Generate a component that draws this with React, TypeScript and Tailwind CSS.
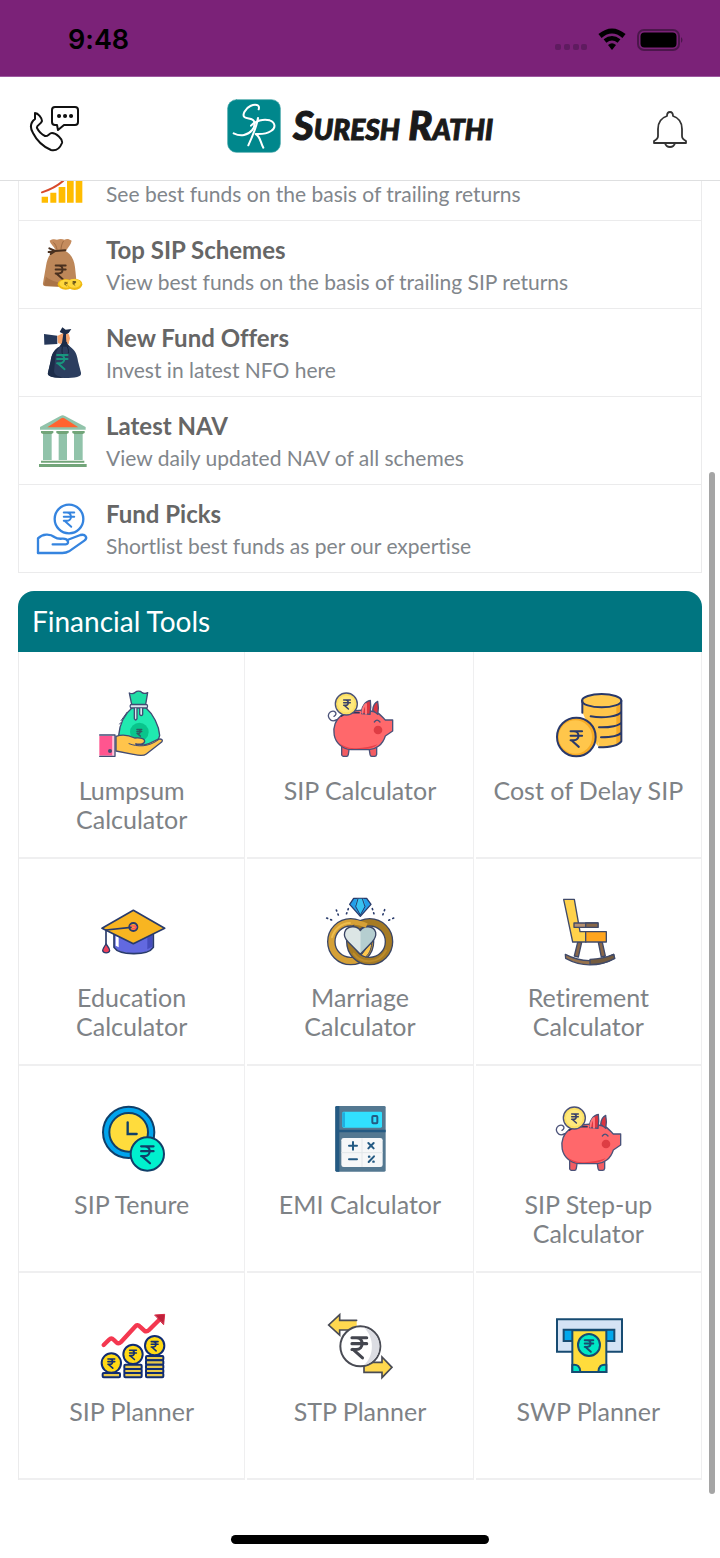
import type { ReactNode } from "react";

type IconProps = { box: string; children: ReactNode; className?: string };

function Icon({ box, children, className = "size-18" }: IconProps) {
  return (
    <svg
      viewBox={box}
      className={`${className} shrink-0`}
      fill="none"
      strokeLinecap="round"
      strokeLinejoin="round"
      aria-hidden="true"
    >
      {children}
    </svg>
  );
}

/* Rupee sign centred on (x, y), drawn on a 24 unit square. */
function Rupee({ x, y, s, color, w = 3 }: { x: number; y: number; s: number; color: string; w?: number }) {
  return (
    <g transform={`translate(${x} ${y}) scale(${s / 24}) translate(-12 -12)`} stroke={color} strokeWidth={w} fill="none">
      <path d="M5 3h14M5 8.5h14M5 14h4c7.5 0 7.5-11 0-11M6 14l9 8" />
    </g>
  );
}

function ReturnsIcon() {
  return (
    <Icon box="42 -63 168 168" className="size-14">
      <g fill="#ffbc00">
        <path d="M65 80h19v18H65zM91 68h18v30H91zM116 51h20v47h-20zM141 32h20v66h-20zM167 10h20v88h-20z" />
      </g>
      <path d="M66 67c30-10 45-18 64-35l30-30" stroke="#d84a2b" strokeWidth="6" />
    </Icon>
  );
}

function SackIcon() {
  return (
    <Icon box="42 201 168 168" className="size-14">
      <path d="M89 212c8-6 16-5 22-3 10-4 17-2 22 0 8-3 14-2 22 3-2 12-10 18-16 29h-32c-4-12-16-18-18-29z" fill="#c58c5e" />
      <path d="M104 243h32c18 9 27 27 29 49l5 48c-5 8-12 10-23 9H78c-8-1-10-5-9-10l9-51c3-22 11-38 26-45z" fill="#bd8759" />
      <path d="M78 320c-2 12-6 20-6 26 20 6 58 4 90 2l6-10c-30 4-66 2-90-18z" fill="#a97347" />
      <path d="M101 218c6 5 8 12 10 20M130 214c-5 8-6 14-7 23" stroke="#9f6b42" strokeWidth="3" />
      <path d="M88 235l18 8 30-2M106 243l-20 3M106 243l-14 9" stroke="#49301f" strokeWidth="6" />
      <Rupee x={122} y={306} s={52} color="#49301f" w={2.6} />
      <ellipse cx="137" cy="343" rx="24" ry="16" fill="#eeb912" />
      <ellipse cx="138" cy="341" rx="20" ry="12" fill="#ffd83d" />
      <ellipse cx="164" cy="343" rx="23" ry="17" fill="#eeb912" />
      <ellipse cx="162" cy="340" rx="20" ry="13" fill="#ffd83d" />
      <Rupee x={138} y={342} s={13} color="#6c5312" w={4} />
      <Rupee x={163} y={340} s={14} color="#493b14" w={4} />
    </Icon>
  );
}

function OfferIcon() {
  return (
    <Icon box="42 465 168 168" className="size-14">
      <path d="M72 492l40 5v25l-39 2z" fill="#263859" />
      <path d="M112 498l18-9 14 1 5 14-3 18-18 2-14-5z" fill="#f4a36d" />
      <path d="M119 486l8-14 10 7 17-2-8 12-8 4 4 28 11 12h-37l10-15 4-27z" fill="#1b2b48" />
      <path d="M138 496l9-3 2 12-3 15-7-5z" fill="#f4a36d" />
      <path d="M118 530h32c15 9 22 25 24 44l9 34c3 13-18 16-49 16s-56-3-50-17l8-34c2-20 11-35 26-43z" fill="#2c3e5f" />
      <path d="M118 530c-18 10-24 26-26 44l-8 34c-4 12 20 16 50 16-26-6-35-12-31-28 3-27 1-47 15-66z" fill="#1d2d4a" />
      <path d="M127 531c-2 13-1 20 2 27M142 531c4 7 4 12 3 18" stroke="#16243c" strokeWidth="3" />
      <Rupee x={127} y={575} s={54} color="#18967e" w={2.6} />
    </Icon>
  );
}

function BankIcon() {
  return (
    <Icon box="42 69 168 168" className="size-14">
      <path d="M60 111l61-33q7-4 14 0l62 33v8H60z" fill="#91c3aa" />
      <path d="M82 112l42-27q4-3 9 0l42 27z" fill="#ff632f" />
      <path d="M69 129h26v81H69zM116 129h25v81h-25zM162 129h26v81h-26z" fill="#91c3aa" />
      <path d="M63 123h37v6l-6 3H69l-6-3zM109 123h37v6l-6 3h-25l-6-3zM157 123h37v6l-6 3h-25l-6-3z" fill="#72a579" />
      <path d="M63 212h130v6H63zM57 222h143v9H57z" fill="#72a579" />
    </Icon>
  );
}

function PicksIcon() {
  return (
    <Icon box="42 333 168 168" className="size-14">
      <g stroke="#3584df" strokeWidth="7">
        <circle cx="147" cy="387" r="43" />
        <path d="M54 489v-44c13-14 37-14 49-4 7 5 13 6 24 5 19-1 22 16 10 17H98" />
        <path d="M142 450l39-15c16-4 23 9 12 17l-46 32q-8 5-20 5H54" />
      </g>
      <Rupee x={147} y={388} s={54} color="#3584df" w={2.6} />
    </Icon>
  );
}

function LumpsumIcon() {
  return (
    <Icon box="45 27 216 216">
      <g stroke="#414b73" strokeWidth="4">
        <path d="M155 82h38c24 21 41 54 43 84-4 20-23 34-52 34-40 0-71-8-71-34 3-31 18-64 42-84z" fill="#20e9b0" />
        <path d="M152 73l-7-34c9 4 14 2 18-2 5-5 15-4 19 0 6 4 11 5 18 1l-6 35z" fill="#20dda6" />
        <path d="M149 74h49q4 5 0 10h-49q-4-5 0-10z" fill="#dce6ee" />
        <path d="M160 85v31q4 8 8 0V85M176 85v18q5 8 9 0V85" fill="#dce6ee" />
      </g>
      <circle cx="175" cy="156" r="28" fill="#09c58c" />
      <Rupee x={175} y={158} s={25} color="#315b65" w={4} />
      <path d="M120 122l18-25M116 132l3-4" stroke="#414b73" strokeWidth="3" />
      <path d="M105 169c22-8 42-2 56 5 14-1 29 0 30 9 0 9-12 11-27 9 30 9 48-6 66-14 12-3 17 2 12 8l-46 36c-10 8-26 4-39 1l-52-10z" fill="#ffc44b" stroke="#414b73" strokeWidth="4" />
      <path d="M144 191c26 10 58 11 89-12" stroke="#414b73" strokeWidth="3" />
      <path d="M55 168h40v59H55z" fill="#ff558f" />
      <path d="M94 168h7v59h-7z" fill="#ffc2d8" />
      <path d="M56 165h46v64H56" stroke="#414b73" strokeWidth="4" />
      <circle cx="87" cy="213" r="6" fill="#414b73" />
    </Icon>
  );
}

function PiggyIcon() {
  return (
    <Icon box="42 27 216 216">
      <g stroke="#4b5279" strokeWidth="4">
        <path d="M80 119c-18 12-34-12-19-23 13-8 24 6 11 13" />
        <path d="M95 201v24q2 4 5 4h10q4 0 5-6l3-20M177 203l3 20q1 6 5 6h9q5 0 6-6v-24" fill="#f35c62" />
        <path d="M98 104c20-17 73-15 99-8 12 4 20 15 29 24h22v33l-22 15c-8 27-29 40-48 41h-55c-57-5-69-77-25-105z" fill="#ff686b" />
        <path d="M188 91c1-12 6-23 15-27 3 14 3 25 0 39zM155 101c-2-20 11-38 26-40 2 13 1 31-1 42z" fill="#dd3540" />
      </g>
      <path d="M87 188c27 25 81 18 116 5-10 10-24 14-37 14h-42c-18-1-30-9-37-19z" fill="#e9414a" />
      <path d="M157 98q2-19 11-26v29" stroke="#ff777a" strokeWidth="6" />
      <path d="M94 108l10-6M131 98h16" stroke="#2e355d" strokeWidth="5" />
      <circle cx="109" cy="72" r="33" fill="#fce064" stroke="#4b5279" strokeWidth="4" />
      <circle cx="109" cy="72" r="25" fill="#ffe97c" />
      <Rupee x={111} y={73} s={34} color="#394069" w={3.2} />
      <circle cx="204" cy="150" r="13" fill="#de3d44" />
      <path d="M193 126q8-11 17 0" stroke="#4b5279" strokeWidth="4" />
    </Icon>
  );
}

function CoinsIcon() {
  return (
    <Icon box="726 27 216 216">
      <path d="M817 62v36l30 25 22 80c35 0 65-6 65-20V62z" fill="#ffc64b" />
      <path d="M817 96l38 20 12 86-8-10z" fill="#ffc64b" />
      <path d="M919 80v113q14-4 15-10V68z" fill="#f6aa25" />
      <ellipse cx="875" cy="62" rx="59" ry="20" fill="#ffca50" stroke="#29396a" strokeWidth="6" />
      <path d="M817 62v36M934 62v122c-9 12-37 18-67 18M842 109c39 7 86 0 92-14M867 142c33 1 62-5 67-15M873 172c30 0 54-5 61-14" stroke="#29396a" strokeWidth="6" />
      <circle cx="799" cy="171" r="58" fill="#f6aa25" stroke="#29396a" strokeWidth="6" />
      <circle cx="796" cy="171" r="50" fill="#ffc64b" />
      <Rupee x={799} y={176} s={59} color="#29396a" w={2.5} />
    </Icon>
  );
}

function EducationIcon() {
  return (
    <Icon box="45 33 216 216">
      <path d="M99 148v39c15 24 101 26 118 0v-41z" fill="#6269e0" stroke="#293b6b" strokeWidth="5" />
      <path d="M104 153v29l9 5v-30z" fill="#fff" />
      <path d="M199 158v35l14-8v-35z" fill="#454dbc" />
      <path d="M157 76l94 54-94 46-94-46z" fill="#f8b521" stroke="#293b6b" strokeWidth="5" />
      <circle cx="157" cy="126" r="12" stroke="#293b6b" strokeWidth="6" />
      <path d="M149 123h13q6 5-1 8h-7" stroke="#fb5063" strokeWidth="5" />
      <path d="M150 127l-75 8v43" stroke="#293b6b" strokeWidth="5" />
      <path d="M75 177c-6 9-10 15-10 20 2 9 19 9 21 0 0-7-5-12-11-20z" fill="#ef405b" stroke="#293b6b" strokeWidth="4" />
    </Icon>
  );
}

function MarriageIcon() {
  return (
    <Icon box="732 33 216 216">
      <circle cx="812" cy="170" r="58" stroke="#3b4664" strokeWidth="26" />
      <circle cx="812" cy="170" r="58" stroke="#d5a036" strokeWidth="18" />
      <path d="M756 157a58 58 0 0 1 54-43" stroke="#edbd4d" strokeWidth="6" />
      <circle cx="869" cy="170" r="58" stroke="#3b4664" strokeWidth="26" />
      <circle cx="869" cy="170" r="58" stroke="#a67b24" strokeWidth="18" />
      <path d="M821 206c22 32 76 32 97-9" stroke="#bd8c2c" strokeWidth="6" />
      <path d="M844 210l31-42c1 17-5 37-17 47z" fill="#fdc64d" stroke="#3b4664" strokeWidth="3" />
      <path d="M841 137c-9-17-41-16-47 5-3 12 2 20 10 28l37 38z" fill="#dce6e5" />
      <path d="M841 137c9-17 40-16 46 5 2 12-3 20-10 28l-36 38z" fill="#b5ced0" />
      <path d="M841 137c-9-17-41-16-47 5-3 12 2 20 10 28l37 38 36-38c7-8 12-16 10-28-6-21-37-22-46-5z" stroke="#3b4664" strokeWidth="4" />
      <path d="M818 112c17-1 28 3 42 10" stroke="#d5a036" strokeWidth="14" strokeLinecap="butt" />
      <path d="M821 40h39l13 18-32 36-32-36z" fill="#239ee9" stroke="#293b6b" strokeWidth="4" />
      <path d="M831 41h20l5 17-15 31-15-31z" fill="#38c2f0" />
      <path d="M834 41l-7 24 14 25 14-25-8-24" stroke="#293b6b" strokeWidth="3" />
      <path d="M805 71l-8 22M769 75l8 20M740 99l20 8M877 71l7 22M914 74l-8 22M941 99l-20 9" stroke="#293b6b" strokeWidth="5" strokeDasharray="3 10" />
    </Icon>
  );
}

function ChairIcon() {
  return (
    <Icon box="36 33 216 216">
      <g stroke="#404a68" strokeWidth="4">
        <path d="M113 172h12l-10 44-12-3zM175 172h12l9 41-12 3z" fill="#8a6748" />
        <path d="M76 208c46 24 98 24 145 0l3 12c-49 27-102 25-147 0z" fill="#98734d" />
        <path d="M150 223c27-1 48-5 71-15l3 12c-23 13-48 19-74 18z" fill="#745b3f" />
        <path d="M71 43h32l17 97h18v31H98z" fill="#ffd24b" />
        <path d="M137 140h62v31h-62z" fill="#ffa51e" />
        <path d="M102 114h72v13h-72z" fill="#b69170" />
        <path d="M137 114h37v13h-37z" fill="#876749" />
      </g>
    </Icon>
  );
}

function TenureIcon() {
  return (
    <Icon box="45 24 216 216">
      <circle cx="143" cy="112" r="77" fill="#00a4ed" stroke="#103f69" strokeWidth="6" />
      <circle cx="143" cy="112" r="58" fill="#ffdc3c" stroke="#103f69" strokeWidth="6" />
      <path d="M140 82v35h27" stroke="#103f69" strokeWidth="7" strokeLinejoin="miter" />
      <circle cx="199" cy="177" r="50" fill="#00f0ce" stroke="#103f69" strokeWidth="6" />
      <Rupee x={199} y={178} s={64} color="#103f69" w={2.5} />
    </Icon>
  );
}

function CalculatorIcon() {
  return (
    <Icon box="732 24 216 216">
      <rect x="766" y="33" width="151" height="197" rx="4" fill="#547891" />
      <path d="M770 33h8v197h-8q-4 0-4-4V37q0-4 4-4z" fill="#245a83" />
      <path d="M769 108h148" stroke="#245a83" strokeWidth="7" strokeLinecap="butt" />
      <rect x="787" y="50" width="119" height="48" rx="4" fill="#31e0ff" />
      <path d="M787 52h8v44h-8z" fill="#20afe0" />
      <rect x="877" y="63" width="15" height="22" rx="3" stroke="#245a83" strokeWidth="6" />
      <rect x="784" y="129" width="124" height="87" rx="7" fill="#f6f7f8" />
      <path d="M846 130v86M784 173h124" stroke="#e2e6e9" strokeWidth="3" strokeLinecap="butt" />
      <path d="M807 152h24M819 141v23M865 144l16 16M881 144l-16 16M807 193h24M866 201l16-17" stroke="#245a83" strokeWidth="6" />
      <path d="M867 185h1M880 200h1" stroke="#245a83" strokeWidth="7" />
    </Icon>
  );
}

const coinStacks = [
  { x: 91, y: 189, rows: [226] },
  { x: 156, y: 163, rows: [201, 214, 226] },
  { x: 221, y: 137, rows: [175, 188, 201, 214, 226] },
];

function SipPlannerIcon() {
  return (
    <Icon box="45 30 216 216">
      <path d="M68 135l16-16q7-7 14 0l8 8q7 6 14-1l42-46q7-8 14-1l14 13q7 5 14-2l34-34" stroke="#f43850" strokeWidth="13" />
      <path d="M222 45l29-2-3 30z" fill="#be203b" stroke="#d72b44" strokeWidth="3" />
      {coinStacks.map((stack) => (
        <g key={stack.x}>
          {stack.rows.map((row) => (
            <rect key={row} x={stack.x - 26} y={row - 7} width="52" height="13" rx="3" fill="#e8c94a" stroke="#102c72" strokeWidth="6" />
          ))}
          <circle cx={stack.x} cy={stack.y} r="29" fill="#ffd914" stroke="#102c72" strokeWidth="6" />
          <Rupee x={stack.x} y={stack.y + 1} s={35} color="#102c72" w={3.2} />
        </g>
      ))}
    </Icon>
  );
}

function StpPlannerIcon() {
  return (
    <Icon box="732 30 216 216">
      <g fill="#ffd84f" stroke="#494b54" strokeWidth="5" strokeLinejoin="miter">
        <path d="M830 61h-51V44l-33 31 33 30V90h51M852 217h54v16l30-31-30-31v16h-54z" />
      </g>
      <circle cx="841" cy="139" r="60" fill="#fff" stroke="#494b54" strokeWidth="6" />
      <path d="M852 83a57 57 0 0 1 0 112c32-28 32-84 0-112z" fill="#dcdde3" />
      <Rupee x={838} y={142} s={76} color="#44464f" w={2.9} />
    </Icon>
  );
}

function SwpPlannerIcon() {
  return (
    <Icon box="36 30 216 216">
      <g stroke="#174b72" strokeWidth="6" strokeLinejoin="miter">
        <path d="M51 58h195v97H51z" fill="#d5e3f5" />
        <path d="M71 89h152v34H71z" fill="#00a7ed" />
        <path d="M97 91h102v125H97z" fill="#ffdc3c" />
        <circle cx="147" cy="135" r="33" fill="#00e8c6" />
        <path d="M97 195q23-4 24 21H97zM199 195q-23-4-24 21h24z" fill="#00e8c6" />
      </g>
      <Rupee x={147} y={137} s={44} color="#174b72" w={3.2} />
    </Icon>
  );
}

const schemes = [
  { title: "Top SIP Schemes", note: "View best funds on the basis of trailing SIP returns", icon: <SackIcon /> },
  { title: "New Fund Offers", note: "Invest in latest NFO here", icon: <OfferIcon /> },
  { title: "Latest NAV", note: "View daily updated NAV of all schemes", icon: <BankIcon /> },
  { title: "Fund Picks", note: "Shortlist best funds as per our expertise", icon: <PicksIcon /> },
];

const tools = [
  { label: "Lumpsum Calculator", icon: <LumpsumIcon /> },
  { label: "SIP Calculator", icon: <PiggyIcon /> },
  { label: "Cost of Delay SIP", icon: <CoinsIcon /> },
  { label: "Education Calculator", icon: <EducationIcon /> },
  { label: "Marriage Calculator", icon: <MarriageIcon /> },
  { label: "Retirement Calculator", icon: <ChairIcon /> },
  { label: "SIP Tenure", icon: <TenureIcon /> },
  { label: "EMI Calculator", icon: <CalculatorIcon /> },
  { label: "SIP Step-up Calculator", icon: <PiggyIcon /> },
  { label: "SIP Planner", icon: <SipPlannerIcon /> },
  { label: "STP Planner", icon: <StpPlannerIcon /> },
  { label: "SWP Planner", icon: <SwpPlannerIcon /> },
];

function StatusBar() {
  return (
    <div className="flex h-[77px] items-center justify-between border-b border-[#9d59a0] bg-[#7b2278] pt-[3px] pr-9 pl-17 text-black">
      <span className="font-['Inter',sans-serif] text-[27px] leading-8 font-semibold">9:48</span>
      <svg viewBox="0 0 132 30" className="h-[30px] w-[132px]" fill="none" aria-hidden="true">
        <g fill="#5f1b60">
          <rect x="3" y="19" width="6" height="6" rx="2" />
          <rect x="12" y="19" width="6" height="6" rx="2" />
          <rect x="21" y="19" width="6" height="6" rx="2" />
          <rect x="29" y="19" width="6" height="6" rx="2" />
        </g>
        <path d="M48 11q12-10 24 0" stroke="#000" strokeWidth="5" />
        <path d="M53 16q7-5.500 14 0" stroke="#000" strokeWidth="4.500" />
        <path d="M56 20q4-3.500 8 0l-4 5z" fill="#000" />
        <rect x="86" y="5" width="41" height="20" rx="6" stroke="#4b164b" strokeWidth="2" />
        <rect x="88.500" y="7.500" width="36" height="15" rx="4" fill="#000" />
        <path d="M129 12q3 3 0 6z" fill="#4b164b" />
      </svg>
    </div>
  );
}

function Header() {
  return (
    <header className="flex h-[104px] items-center justify-between border-b border-[#dedfe0] bg-white px-7">
      <button type="button" aria-label="Contact us">
        <svg viewBox="0 0 54 50" className="h-[50px] w-[54px]" fill="none" stroke="#111" strokeWidth="2" strokeLinejoin="round" strokeLinecap="round" aria-hidden="true">
          <path d="M7 15c-5 4-5 9-2 14 4 8 11 14 18 17 5 1 9-2 11-7 1-4-6-10-10-10-3 0-4 4-7 3-4-2-6-4-8-8-1-3 4-3 5-7 0-3-4-8-7-8z" />
          <path d="M27 3h20q3 0 3 3v12q0 3-3 3H36l-6 5-1-5h-2q-3 0-3-3V6q0-3 3-3z" />
          <path d="M31 12h.1M37 12h.1M43 12h.1" strokeWidth="4" />
        </svg>
      </button>
      <a href="#home" className="flex items-center gap-3 pb-[5px] text-[#1a1a1a]">
        <svg viewBox="29 41 162 162" className="size-[54px] shrink-0" fill="none" stroke="#fff" strokeLinecap="round" strokeLinejoin="round" aria-hidden="true">
          <rect x="31" y="43" width="158" height="158" rx="26" fill="#00878c" stroke="#3ca1a5" strokeWidth="2" />
          <path d="M124 72c5-15-11-17-25-10-15 7-26 27-17 34 8 6 26 1 29 14 4 18-12 35-31 39-11 3-23-1-31-5" strokeWidth="6" />
          <path d="M122 98c-5 30-18 58-29 82M101 121c14-15 37-21 56-16 19 7 18 24 4 32-12 8-30 10-46 9 14 7 13 22 23 41" strokeWidth="6" />
        </svg>
        <span className="pb-[2px] font-['Lato',sans-serif] text-[40px] leading-10 font-black whitespace-nowrap italic [-webkit-text-stroke:1px_#1a1a1a] [font-variant-caps:small-caps]">
          Suresh Rathi
        </span>
      </a>
      <button type="button" aria-label="Notifications" className="flex w-[54px] justify-end pr-1">
        <svg viewBox="0 0 36 38" className="h-[38px] w-9" fill="none" stroke="#333" strokeWidth="1.800" strokeLinejoin="round" aria-hidden="true">
          <path d="M18 2q-3 0-3 4C9 8 6 12 6 19v7q0 3-4 5v2h32v-2q-4-2-4-5v-7c0-7-3-11-9-13q0-4-3-4z" />
          <path d="M13 33q1 4 5 4t5-4" />
        </svg>
      </button>
    </header>
  );
}

export default function App() {
  return (
    <div className="relative min-h-screen bg-white pb-3 font-['Lato',sans-serif] [font-variant-ligatures:none]">
      <StatusBar />
      <Header />
      <main className="px-[18px]">
        <ul className="border-x border-[#ebebec]">
          <li className="flex h-10 items-end gap-4 overflow-hidden border-b border-[#ebebec] pl-[15px]">
            <div className="pb-[15px]">
              <ReturnsIcon />
            </div>
            <p className="pb-[10px] text-[21px] leading-8 text-[#81868b]">See best funds on the basis of trailing returns</p>
          </li>
          {schemes.map((item) => (
            <li key={item.title} className="border-b border-[#ebebec]">
              <a href="#schemes" className="flex h-[87px] items-center gap-4 pl-[15px]">
                {item.icon}
                <div className="pt-[2px]">
                  <h2 className="text-2xl leading-8 font-bold text-[#666]">{item.title}</h2>
                  <p className="text-[21px] leading-8 text-[#81868b]">{item.note}</p>
                </div>
              </a>
            </li>
          ))}
        </ul>
        <section className="mt-[18px]">
          <h2 className="rounded-t-[16px] bg-[#007580] px-[14px] pt-[14px] pb-[15px] text-[28px] leading-8 text-white">Financial Tools</h2>
          <div className="grid grid-cols-3 gap-x-[2px] border-l border-[#ebebec]">
            {tools.map((tool) => (
              <a
                key={tool.label}
                href="#tools"
                className="flex h-[207px] flex-col items-center gap-[15px] border-r border-b-2 border-[#efeff0] px-3 pt-[37px] text-center text-[25px] leading-[29px] text-[#7e8286]"
              >
                {tool.icon}
                <span>{tool.label}</span>
              </a>
            ))}
          </div>
        </section>
      </main>
      <div className="mx-auto mt-[55px] h-[9px] w-[258px] rounded-full bg-black" />
      <div className="absolute top-[472px] right-[5px] h-[1022px] w-[6px] rounded-full bg-[#a5a5a5]" />
    </div>
  );
}
